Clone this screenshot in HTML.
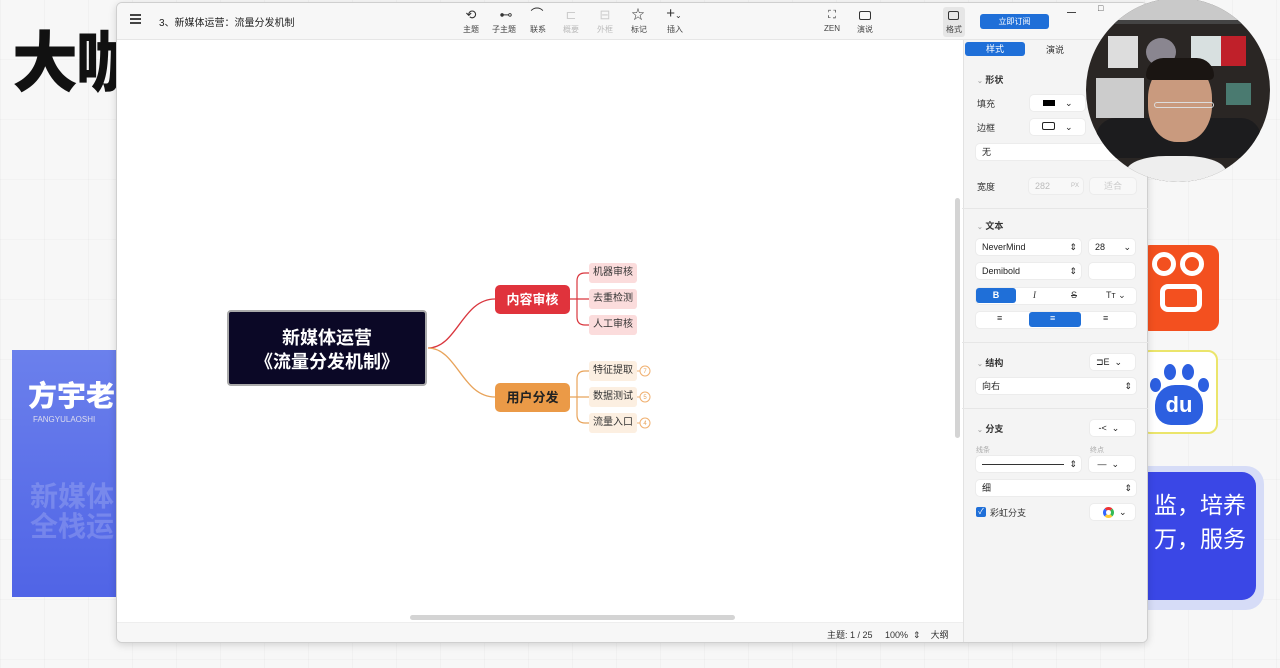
<!DOCTYPE html>
<html><head><meta charset="utf-8">
<style>
*{margin:0;padding:0;box-sizing:border-box}
body{width:1280px;height:668px;overflow:hidden;position:relative;background:#f3f3f3;font-family:"Liberation Sans","Noto Sans CJK SC",sans-serif;color:#333}
.a{position:absolute}
.grid{position:absolute;inset:0;background:
linear-gradient(90deg,rgba(0,0,0,.025) 1px,transparent 1px) 0 0/44px 100%,
linear-gradient(0deg,rgba(0,0,0,.02) 1px,transparent 1px) 0 0/100% 60px,#f7f7f7}
.t{font-size:8px;color:#444;text-align:center}
.ic{font-size:13px;color:#333;text-align:center;line-height:14px}
.lbl{font-size:9px;color:#333}
.box{position:absolute;background:#fff;border-radius:4px;box-shadow:0 0 0 1px #ececec;font-size:9px;color:#222;padding-left:6px;line-height:16px;height:16px}
.sub{position:absolute;font-size:10px;color:#333;line-height:20px;height:20px;padding:0 4px;border-radius:3px}
</style></head><body>
<div class="grid"></div>
<div class="a" style="left:12px;top:28px;font-size:66px;font-weight:900;color:#111;letter-spacing:-2px;line-height:70px">大咖</div>
<div class="a" style="left:12px;top:350px;width:106px;height:247px;background:linear-gradient(180deg,#6b80ec,#5064e6)"></div>
<div class="a" style="left:28px;top:373px;font-size:29px;font-weight:900;color:#fff;white-space:nowrap">方宇老师</div>
<div class="a" style="left:33px;top:415px;font-size:8px;color:#dde;white-space:nowrap">FANGYULAOSHI</div>
<div class="a" style="left:30px;top:482px;font-size:28px;font-weight:700;color:rgba(255,255,255,.18);line-height:30px;white-space:nowrap">新媒体<br>全栈运</div>
<div class="a" style="left:1140px;top:245px;width:79px;height:86px;background:#f3501f;border-radius:10px"></div>
<div class="a" style="left:1152px;top:252px;width:24px;height:24px;border:5px solid #fff;border-radius:50%"></div>
<div class="a" style="left:1180px;top:252px;width:24px;height:24px;border:5px solid #fff;border-radius:50%"></div>
<div class="a" style="left:1160px;top:284px;width:42px;height:28px;border:5px solid #fff;border-radius:8px"></div>
<div class="a" style="left:1140px;top:350px;width:78px;height:84px;background:#fff;border:2px solid #ebe56b;border-radius:10px"></div>
<div class="a" style="left:1155px;top:385px;width:48px;height:40px;background:#2c5fe0;border-radius:20px 20px 16px 16px;color:#fff;font-weight:700;font-size:22px;text-align:center;line-height:40px">du</div>
<div class="a" style="left:1150px;top:378px;width:11px;height:14px;background:#2c5fe0;border-radius:50%"></div>
<div class="a" style="left:1164px;top:364px;width:12px;height:16px;background:#2c5fe0;border-radius:50%"></div>
<div class="a" style="left:1182px;top:364px;width:12px;height:16px;background:#2c5fe0;border-radius:50%"></div>
<div class="a" style="left:1198px;top:378px;width:11px;height:14px;background:#2c5fe0;border-radius:50%"></div>
<div class="a" style="left:1130px;top:466px;width:134px;height:144px;background:#d6dcf7;border-radius:18px"></div>
<div class="a" style="left:1130px;top:472px;width:126px;height:128px;background:#3a47e6;border-radius:14px;color:#fff;font-size:23px;line-height:34px;padding:16px 0 0 24px;white-space:nowrap">监，培养<br>万，服务</div>
<div class="a" style="left:116px;top:2px;width:1032px;height:641px;background:#fff;border:1px solid #cfcfcf;border-radius:6px;box-shadow:0 2px 8px rgba(0,0,0,.15);overflow:hidden">
 <div class="a" style="left:0;top:0;width:1032px;height:37px;background:#f7f7f7;border-bottom:1px solid #e6e6e6"></div>
 <div class="a" style="left:13px;top:11px;width:11px;height:1.5px;background:#444;box-shadow:0 4px 0 #444,0 8px 0 #444"></div>
 <div class="a" style="left:42px;top:11px;font-size:10px;color:#222">3、新媒体运营：流量分发机制</div>
 <div class="a ic" style="left:345px;top:5px;width:18px">⟲</div><div class="a t" style="left:341px;top:21px;width:26px">主题</div>
 <div class="a ic" style="left:379px;top:5px;width:20px">⊷</div><div class="a t" style="left:372px;top:21px;width:30px">子主题</div>
 <div class="a ic" style="left:411px;top:5px;width:18px">⌒</div><div class="a t" style="left:408px;top:21px;width:26px">联系</div>
 <div class="a ic" style="left:445px;top:5px;width:18px;color:#ccc">⊏</div><div class="a t" style="left:441px;top:21px;width:26px;color:#bbb">概要</div>
 <div class="a ic" style="left:479px;top:5px;width:18px;color:#ccc">⊟</div><div class="a t" style="left:475px;top:21px;width:26px;color:#bbb">外框</div>
 <div class="a ic" style="left:512px;top:5px;width:18px">☆</div><div class="a t" style="left:509px;top:21px;width:26px">标记</div>
 <div class="a ic" style="left:544px;top:4px;width:26px;font-size:15px">+<span style="font-size:8px">⌄</span></div><div class="a t" style="left:545px;top:21px;width:26px">插入</div>
 <div class="a ic" style="left:706px;top:5px;width:18px;font-size:11px">⛶</div><div class="a t" style="left:702px;top:21px;width:26px">ZEN</div>
 <div class="a" style="left:742px;top:8px;width:12px;height:9px;border:1.3px solid #333;border-radius:2px"></div><div class="a t" style="left:735px;top:21px;width:26px">演说</div>
 <div class="a" style="left:826px;top:4px;width:22px;height:30px;background:#e6e6e6;border-radius:3px"></div>
 <div class="a" style="left:831px;top:8px;width:11px;height:9px;border:1.3px solid #333;border-radius:2px"></div><div class="a t" style="left:824px;top:21px;width:26px">格式</div>
 <div class="a" style="left:863px;top:11px;width:69px;height:15px;background:#1f6fd8;border-radius:3px;color:#fff;font-size:8px;text-align:center;line-height:15px">立即订阅</div>
 <div class="a" style="left:950px;top:9px;width:9px;height:1px;background:#444"></div>
 <svg class="a" style="left:0;top:0" width="840" height="620">
  <path d="M311 345 C340 345,345 296,378 296" fill="none" stroke="#d9363e" stroke-width="1.3"/>
  <path d="M311 345 C340 345,345 394,378 394" fill="none" stroke="#e8a35a" stroke-width="1.3"/>
  <path d="M449 296 H460 M460 278 Q460 270 468 270 H474 M460 278 V314 Q460 322 468 322 H474 M460 296 H474" fill="none" stroke="#d9363e" stroke-width="1.2"/>
  <path d="M449 394 H460 M460 376 Q460 368 468 368 H474 M460 376 V412 Q460 420 468 420 H474 M460 394 H474" fill="none" stroke="#e8a35a" stroke-width="1.2"/>
  <g fill="none" stroke="#f0b070" stroke-width="1"><circle cx="528" cy="368" r="5"/><circle cx="528" cy="394" r="5"/><circle cx="528" cy="420" r="5"/><path d="M518 368H523M518 394H523M518 420H523"/></g>
  <g font-size="6" fill="#e8a35a" text-anchor="middle" font-family="Liberation Sans"><text x="528" y="370">7</text><text x="528" y="396">5</text><text x="528" y="422">4</text></g>
 </svg>
 <div class="a" style="left:110px;top:307px;width:200px;height:76px;background:#0b0826;border:2px solid #aaa;border-radius:4px;color:#fff;font-weight:700;font-size:18px;line-height:24px;text-align:center;padding-top:14px">新媒体运营<br>《流量分发机制》</div>
 <div class="a" style="left:378px;top:282px;width:75px;height:29px;background:#e0333c;border-radius:5px;color:#fff;font-weight:700;font-size:13px;text-align:center;line-height:29px">内容审核</div>
 <div class="a" style="left:378px;top:380px;width:75px;height:29px;background:#eb9a47;border-radius:5px;color:#222;font-weight:700;font-size:13px;text-align:center;line-height:29px">用户分发</div>
 <div class="sub" style="left:472px;top:260px;background:#fbdcdc">机器审核</div>
 <div class="sub" style="left:472px;top:286px;background:#fbdcdc">去重检测</div>
 <div class="sub" style="left:472px;top:312px;background:#fbdcdc">人工审核</div>
 <div class="sub" style="left:472px;top:358px;background:#fcefe1">特征提取</div>
 <div class="sub" style="left:472px;top:384px;background:#fcefe1">数据测试</div>
 <div class="sub" style="left:472px;top:410px;background:#fcefe1">流量入口</div>
 <div class="a" style="left:838px;top:195px;width:5px;height:240px;background:#d4d4d4;border-radius:3px"></div>
 <div class="a" style="left:293px;top:612px;width:325px;height:5px;background:#d4d4d4;border-radius:3px"></div>
 <div class="a" style="left:0;top:619px;width:846px;height:22px;background:#f7f7f7;border-top:1px solid #eee"></div>
 <div class="a" style="left:710px;top:625px;font-size:9px;color:#333;white-space:nowrap">主题: 1 / 25 &nbsp;&nbsp;&nbsp;&nbsp;100% &nbsp;⇕ &nbsp;&nbsp;&nbsp;大纲</div>
 <div class="a" style="left:846px;top:37px;width:186px;height:604px;background:#f4f4f4;border-left:1px solid #e2e2e2"></div>
</div>
<div class="a" style="left:965px;top:42px;width:60px;height:14px;background:#1f6fd8;border-radius:3px;color:#fff;font-size:9px;text-align:center;line-height:14px">样式</div>
<div class="a lbl" style="left:1046px;top:43px">演说</div>
<div class="a lbl" style="left:977px;top:73px;font-weight:700"><span style="color:#aaa;font-size:7px">⌄</span> 形状</div>
<div class="a lbl" style="left:977px;top:97px">填充</div>
<div class="box" style="left:1030px;top:95px;width:55px"><span style="display:inline-block;width:12px;height:6px;background:#000;margin-left:7px"></span>&nbsp;&nbsp;&nbsp;&nbsp;⌄</div>
<div class="a lbl" style="left:977px;top:121px">边框</div>
<div class="box" style="left:1030px;top:119px;width:55px"><span style="display:inline-block;width:13px;height:8px;border:1px solid #222;border-radius:2px;margin-left:6px"></span>&nbsp;&nbsp;&nbsp;&nbsp;⌄</div>
<div class="box" style="left:976px;top:144px;width:160px">无</div>
<div class="a lbl" style="left:977px;top:180px">宽度</div>
<div class="box" style="left:1029px;top:178px;width:54px;color:#bbb;background:#f8f8f8">282<span style="float:right;font-size:6px;margin-right:4px">PX</span></div>
<div class="box" style="left:1090px;top:178px;width:46px;color:#ccc;background:#f8f8f8;text-align:center;padding:0">适合</div>
<div class="a" style="left:962px;top:208px;width:186px;height:1px;background:#e6e6e6"></div>
<div class="a lbl" style="left:977px;top:219px;font-weight:700"><span style="color:#aaa;font-size:7px">⌄</span> 文本</div>
<div class="box" style="left:976px;top:239px;width:105px">NeverMind<span style="float:right;margin-right:4px">⇕</span></div>
<div class="box" style="left:1089px;top:239px;width:46px">28<span style="float:right;margin-right:4px">⌄</span></div>
<div class="box" style="left:976px;top:263px;width:105px">Demibold<span style="float:right;margin-right:4px">⇕</span></div>
<div class="box" style="left:1089px;top:263px;width:46px"></div>
<div class="box" style="left:976px;top:288px;width:160px;padding:0"></div>
<div class="a" style="left:976px;top:288px;width:40px;height:15px;background:#1f6fd8;border-radius:3px;color:#fff;font-weight:700;font-size:9px;text-align:center;line-height:15px">B</div>
<div class="a lbl" style="left:1033px;top:290px;font-style:italic;font-family:'Liberation Serif',serif">I</div>
<div class="a lbl" style="left:1071px;top:290px;text-decoration:line-through">S</div>
<div class="a lbl" style="left:1106px;top:290px">Tт ⌄</div>
<div class="box" style="left:976px;top:312px;width:160px;padding:0"></div>
<div class="a" style="left:1029px;top:312px;width:52px;height:15px;background:#1f6fd8;border-radius:3px"></div>
<div class="a lbl" style="left:997px;top:313px">≡</div><div class="a lbl" style="left:1050px;top:313px;color:#fff">≡</div><div class="a lbl" style="left:1103px;top:313px">≡</div>
<div class="a" style="left:962px;top:342px;width:186px;height:1px;background:#e6e6e6"></div>
<div class="a lbl" style="left:977px;top:356px;font-weight:700"><span style="color:#aaa;font-size:7px">⌄</span> 结构</div>
<div class="box" style="left:1090px;top:354px;width:45px">⊐E&nbsp;&nbsp;⌄</div>
<div class="box" style="left:976px;top:378px;width:160px">向右<span style="float:right;margin-right:4px">⇕</span></div>
<div class="a" style="left:962px;top:408px;width:186px;height:1px;background:#e6e6e6"></div>
<div class="a lbl" style="left:977px;top:422px;font-weight:700"><span style="color:#aaa;font-size:7px">⌄</span> 分支</div>
<div class="box" style="left:1090px;top:420px;width:45px">&nbsp;-&lt;&nbsp;&nbsp;⌄</div>
<div class="a" style="left:976px;top:445px;font-size:7px;color:#aaa">线条</div>
<div class="a" style="left:1090px;top:445px;font-size:7px;color:#aaa">终点</div>
<div class="box" style="left:976px;top:456px;width:105px"><span style="display:inline-block;width:82px;height:1px;background:#333;vertical-align:middle"></span><span style="float:right;margin-right:4px">⇕</span></div>
<div class="box" style="left:1089px;top:456px;width:46px">&nbsp;—&nbsp;&nbsp;⌄</div>
<div class="box" style="left:976px;top:480px;width:160px">细<span style="float:right;margin-right:4px">⇕</span></div>
<div class="a" style="left:976px;top:507px;width:10px;height:10px;background:#1f6fd8;border-radius:2px;color:#fff;font-size:8px;line-height:10px;text-align:center">✓</div>
<div class="a lbl" style="left:990px;top:506px">彩虹分支</div>
<div class="box" style="left:1090px;top:504px;width:45px;padding-left:13px"><span style="display:inline-block;width:11px;height:11px;border-radius:50%;border:3px solid;border-color:#e33 #3b5 #fc3 #36f;vertical-align:middle"></span>&nbsp;&nbsp;⌄</div>
<div class="a" style="left:1086px;top:-2px;width:184px;height:184px;border-radius:50%;overflow:hidden;background:#2a2624">
 <div class="a" style="left:0;top:0;width:184px;height:22px;background:#c9c9c9"></div>
 <div class="a" style="left:10px;top:22px;width:160px;height:4px;background:#444"></div>
 <div class="a" style="left:22px;top:38px;width:30px;height:32px;background:#ddd"></div>
 <div class="a" style="left:60px;top:40px;width:30px;height:28px;background:#8a8690;border-radius:50%"></div>
 <div class="a" style="left:105px;top:38px;width:30px;height:30px;background:#d8e0e0"></div>
 <div class="a" style="left:135px;top:38px;width:25px;height:30px;background:#c0202a"></div>
 <div class="a" style="left:10px;top:80px;width:48px;height:40px;background:#ccc"></div>
 <div class="a" style="left:140px;top:85px;width:25px;height:22px;background:#4a7a70"></div>
 <div class="a" style="left:10px;top:120px;width:165px;height:40px;background:#1c1c1e;border-radius:20px"></div>
 <div class="a" style="left:62px;top:64px;width:64px;height:80px;background:#c99a7e;border-radius:45%"></div>
 <div class="a" style="left:60px;top:60px;width:68px;height:22px;background:#1a1512;border-radius:30px 30px 8px 8px"></div>
 <div class="a" style="left:68px;top:104px;width:60px;height:6px;border:1px solid #ddd;border-radius:3px"></div>
 <div class="a" style="left:40px;top:158px;width:100px;height:40px;background:#eee;border-radius:40% 40% 0 0"></div>
</div>
<div class="a" style="left:1098px;top:3px;font-size:9px;color:#444">□</div>
</body></html>
